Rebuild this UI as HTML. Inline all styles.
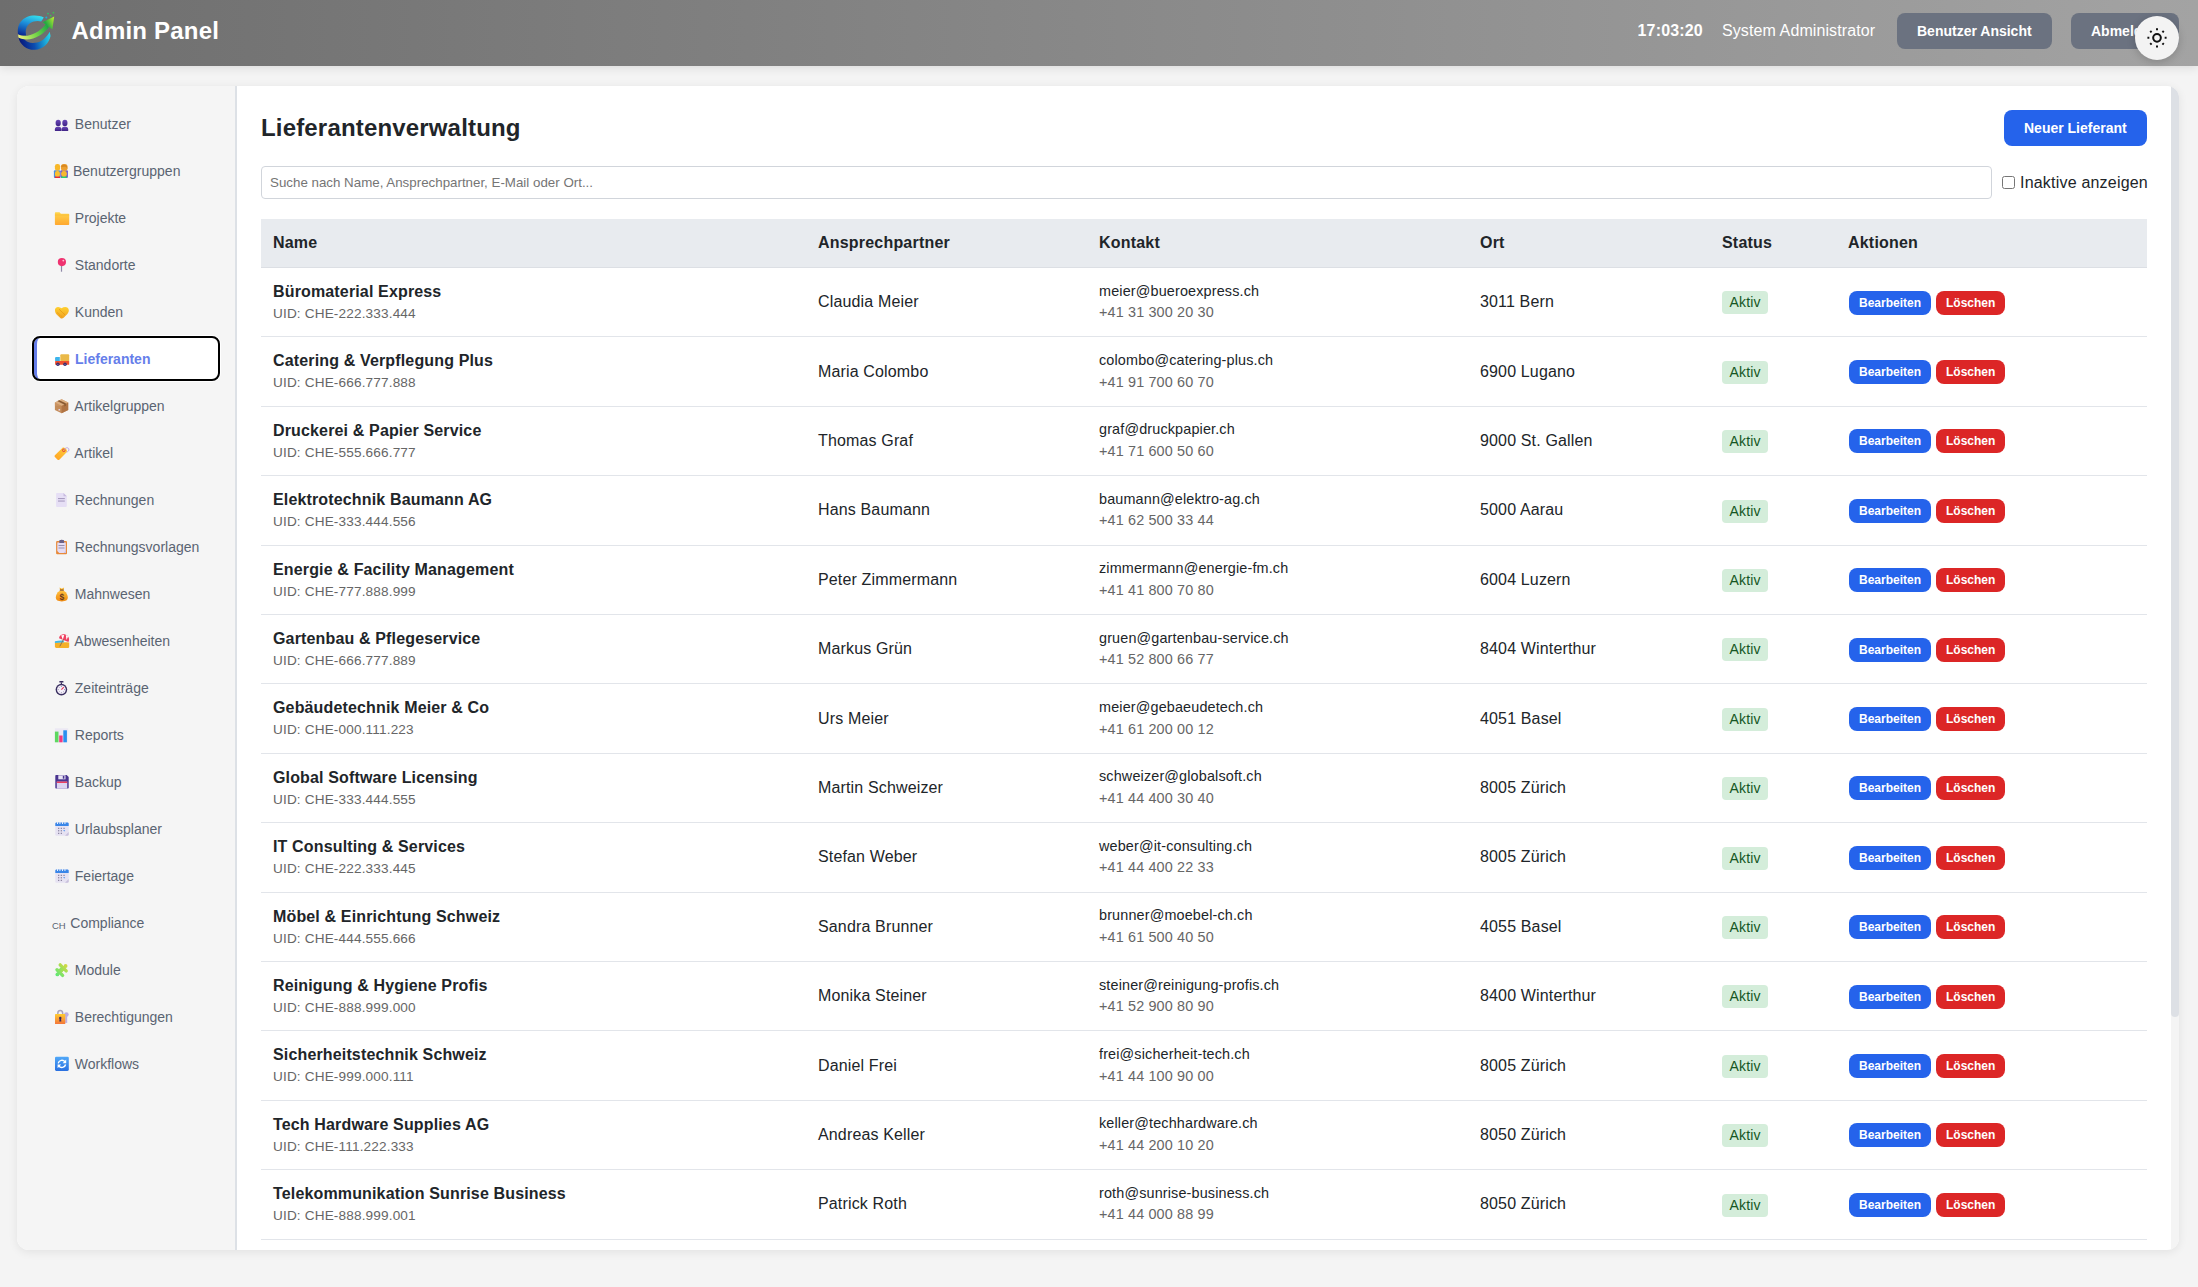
<!DOCTYPE html>
<html lang="de"><head><meta charset="utf-8"><title>Admin Panel</title>
<style>
*{box-sizing:border-box}
html,body{margin:0;padding:0;width:2198px;height:1287px;overflow:hidden}
body{background:#f4f4f4;font-family:"Liberation Sans",sans-serif;color:#212529;position:relative}
.hdr{position:absolute;left:0;top:0;width:2198px;height:66px;background:linear-gradient(90deg,#6e6e6e 0%,#a3a3a3 100%);box-shadow:0 2px 9px rgba(0,0,0,.1);z-index:2}
.logo{position:absolute;left:10px;top:5px}
.brand{position:absolute;left:71.5px;top:17px;font-size:24px;font-weight:bold;color:#fff;line-height:28px;letter-spacing:.2px}
.time{position:absolute;left:1637.5px;top:22px;font-size:16px;font-weight:bold;color:#fff;line-height:18px;letter-spacing:.17px}
.user{position:absolute;left:1722px;top:22px;font-size:16px;color:#fff;line-height:18px;letter-spacing:.1px}
.hbtn{position:absolute;top:13px;height:36px;padding:0 20px;background:#6b7280;color:#fff;font-size:14px;font-weight:bold;line-height:36px;border-radius:8px;white-space:nowrap}
.toggle{position:absolute;left:2135px;top:16px;width:44px;height:44px;border-radius:50%;background:#f3f3f3;box-shadow:0 2px 8px rgba(0,0,0,.18);display:flex;align-items:center;justify-content:center;z-index:3}
.card{position:absolute;left:17px;top:86px;width:2162px;height:1164px;border-radius:12px;background:#fff;box-shadow:0 2px 10px rgba(0,0,0,.08);overflow:hidden}
.side{position:absolute;left:0;top:0;width:220px;height:1164px;background:#f5f5f5;border-right:2px solid #dde1e6}
.mi{position:absolute;left:17px;width:184px;height:41px;font-size:14px;color:#5a6472;line-height:16px;white-space:nowrap}
.mi .ic{position:absolute;left:20px;top:14px;width:16px;height:16px}
.mi .ic svg{display:block;overflow:visible}
.mi .lb{position:absolute;left:40.8px;top:13px}
.mi .chtxt{position:absolute;left:-2.1px;top:3.6px;font-size:9.5px;line-height:11px;color:#5a6472}
.mi.active{background:#fff;border-left:3px solid #667eea;border-radius:6px;outline:2px solid #000;outline-offset:0;box-shadow:0 0 0 3px #fff}
.mi.active .ic{left:17px}
.mi.active .lb{left:38px;color:#667eea;font-weight:bold}
.content{position:absolute;left:220px;top:0;width:1942px;height:1164px;overflow:hidden}
.sb{position:absolute;right:0;top:0;width:8px;height:1164px;background:#f4f4f4}
.thumb{position:absolute;right:0;top:0;width:8px;height:931px;background:#dde0e5;border-radius:0 0 4px 4px}
.title{position:absolute;left:24px;top:24px;font-size:24px;font-weight:bold;line-height:36px;margin:0;color:#212529;letter-spacing:.17px}
.newbtn{position:absolute;left:1767px;top:24px;height:36px;padding:0 20px;background:#2563eb;color:#fff;font-size:14px;font-weight:bold;line-height:36px;border-radius:8px}
.search{position:absolute;left:24px;top:80px;width:1731px;height:33px;border:1px solid #d1d5db;border-radius:4px;background:#fff;font-size:13.333px;color:#757575;padding:0 8px;line-height:32px}
.chk{position:absolute;left:1765px;top:90px;width:13px;height:13px;border:1px solid #767676;border-radius:2.5px;background:#fff}
.chkl{position:absolute;left:1783px;top:88px;font-size:16px;color:#212529;line-height:18px;letter-spacing:.2px}
table{position:absolute;left:24px;top:133px;width:1886px;border-collapse:collapse;table-layout:fixed}
th{background:#e8ebef;text-align:left;font-size:16px;font-weight:bold;padding:12px;line-height:24px;border-bottom:1px solid #dcdfe4;color:#212529;letter-spacing:.2px}
td{padding:12px;border-bottom:1px solid #e2e5ea;vertical-align:middle;line-height:1.5;font-size:16px;color:#212529;letter-spacing:.15px}
td.act{padding-left:13px;letter-spacing:0}
.nm{font-weight:bold;font-size:16px;line-height:24px}
.uid{font-size:13.6px;line-height:20.4px;color:#666}
.em{font-size:14.4px;line-height:21.6px;color:#212529}
.ph{font-size:14.4px;line-height:21.6px;color:#666}
.badge{display:inline-block;background:#d4edda;color:#155724;font-size:14px;line-height:21px;padding:1px 7.5px;border-radius:4px;vertical-align:middle}
.btn{display:inline-block;color:#fff;font-size:12px;font-weight:bold;line-height:14px;padding:5px 10px;border-radius:8px;margin-right:5px;vertical-align:middle}
.be{background:#2563eb}
.lo{background:#dc2626}
</style></head><body>
<div class="hdr">
<div class="logo"><svg width="60" height="55" viewBox="10 5 60 55">
<defs>
<linearGradient id="lg1" gradientUnits="userSpaceOnUse" x1="30" y1="14" x2="24" y2="36"><stop offset="0" stop-color="#34dcec"/><stop offset=".45" stop-color="#1c8ad8"/><stop offset="1" stop-color="#0a2590"/></linearGradient>
<linearGradient id="lg3" gradientUnits="userSpaceOnUse" x1="20" y1="44" x2="50" y2="38"><stop offset="0" stop-color="#08187a"/><stop offset=".45" stop-color="#0c4cb0"/><stop offset="1" stop-color="#22d0ea"/></linearGradient>
<linearGradient id="lg2" gradientUnits="userSpaceOnUse" x1="18" y1="37" x2="54" y2="17"><stop offset="0" stop-color="#f0f080"/><stop offset=".4" stop-color="#78d848"/><stop offset=".75" stop-color="#22a844"/><stop offset="1" stop-color="#c0f030"/></linearGradient>
</defs>
<path d="M43.8,17.4 C 37,14.2 26,14.5 20.5,22 C 17.6,26 17.4,31 18.2,35.5 L 26.2,35.8 C 25,30.5 26.5,25.5 30,23.3 C 33.5,21 38,20.6 41.2,21.6 Z" fill="url(#lg1)"/>
<path d="M18.4,37.2 C 20,45 27,50 34.5,49.8 C 43,49.6 49.2,43 50.6,36 L 49.7,31.8 C 46.5,37 43,41.2 37,42.6 C 31,43.8 27,42.4 24.5,39.5 Z" fill="url(#lg3)"/>
<path d="M18,34.2 C 26,38.5 38,34 45.5,24.5 L 42.5,22.2 L 54.2,16.5 L 52.3,29.4 L 49.2,26.8 C 42,36.5 30,42.5 18.6,37.8 Z" fill="url(#lg2)"/>
<circle cx="46.3" cy="17.6" r="1" fill="#18b0d8"/><circle cx="48" cy="13.6" r=".9" fill="#30c070"/><circle cx="50.6" cy="15.7" r=".9" fill="#40c050"/><circle cx="53.4" cy="12.7" r=".9" fill="#40c050"/>
</svg></div>
<div class="brand">Admin Panel</div>
<div class="time">17:03:20</div>
<div class="user">System Administrator</div>
<div class="hbtn" style="left:1897px">Benutzer Ansicht</div>
<div class="hbtn" style="left:2071px">Abmelden</div>
</div>
<div class="toggle"><svg width="23" height="23" viewBox="0 0 24 24" fill="none" stroke="#111" stroke-width="2.1" stroke-linecap="butt" style="transform:translate(-0.5px,-0.7px)"><circle cx="12" cy="12" r="4"/><path d="M12 2v2M12 20v2M4.93 4.93l1.41 1.41M17.66 17.66l1.41 1.41M2 12h2M20 12h2M6.34 17.66l-1.41 1.41M19.07 4.93l-1.41 1.41"/></svg></div>
<div class="card">
<div class="side">
<div class="mi" style="top:17px"><span class="ic"><svg width="16" height="16" viewBox="0 0 16 16"><defs><linearGradient id="gu" x1="0" y1="0" x2="0" y2="1"><stop offset="0" stop-color="#6a48b8"/><stop offset="1" stop-color="#3f2385"/></linearGradient></defs><g fill="url(#gu)"><ellipse cx="4.2" cy="6" rx="2.6" ry="3.2"/><ellipse cx="10.9" cy="6" rx="2.6" ry="3.2"/><path d="M0.9 14v-1.8c0-1.4 1-2.4 2.4-2.4h1.8c1.4 0 2.3 1 2.3 2.4V14z"/><path d="M7.6 14v-1.8c0-1.4 1-2.4 2.4-2.4h1.8c1.4 0 2.4 1 2.4 2.4V14z"/></g></svg></span><span class="lb">Benutzer</span></div>
<div class="mi" style="top:64px"><span class="ic"><svg width="16" height="16" viewBox="0 0 16 16"><rect x="-0.1" y="6.2" width="6.2" height="7.8" rx="1" fill="#4a8ee0"/><rect x="6.3" y="6.2" width="7.6" height="7.8" rx="1" fill="#6a5ad0"/><rect x="0.9" y="-0.1" width="5.2" height="6.9" rx="2.3" fill="#f8b828"/><rect x="7" y="-0.1" width="6.5" height="6.9" rx="2.6" fill="#eca030"/><path d="M7.2 2.2c.4-1.8 5.4-2 6 .2l.2 2.6-1.2-2c-1.2-.5-3.4-.5-4.6.3z" fill="#d88820"/><rect x="1" y="6.9" width="4.9" height="6" rx="2" fill="#fbc030"/><rect x="7.2" y="6.9" width="5.6" height="6" rx="2.3" fill="#f8b830"/><rect x="0.9" y="12.6" width="5.1" height="1.4" fill="#e8283a"/><rect x="7.2" y="12.6" width="5.6" height="1.4" fill="#28d070"/></svg></span><span class="lb" style="left:39px">Benutzergruppen</span></div>
<div class="mi" style="top:111px"><span class="ic"><svg width="16" height="16" viewBox="0 0 16 16"><defs><linearGradient id="gf" x1="0" y1="0" x2="0" y2="1"><stop offset="0" stop-color="#ffd54a"/><stop offset="1" stop-color="#ffa830"/></linearGradient></defs><path d="M0.9 2.3c0-.6.4-1 1-1h3.6l1.4 1.4h7.3c.6 0 1 .4 1 1V13c0 .6-.4 1-1 1H1.9c-.6 0-1-.4-1-1z" fill="url(#gf)"/><path d="M0.9 4h14.3" stroke="#f0b030" stroke-width=".5"/></svg></span><span class="lb">Projekte</span></div>
<div class="mi" style="top:158px"><span class="ic"><svg width="16" height="16" viewBox="0 0 16 16"><rect x="6.9" y="7.5" width="1.2" height="6.2" fill="#8f88a8"/><circle cx="7.9" cy="4.1" r="4.1" fill="#ef3370"/><circle cx="9.3" cy="2.6" r="0.9" fill="#ffc0d4"/></svg></span><span class="lb">Standorte</span></div>
<div class="mi" style="top:205px"><span class="ic"><svg width="16" height="16" viewBox="0 0 16 16"><defs><linearGradient id="gh" x1="0" y1="0" x2="0" y2="1"><stop offset="0" stop-color="#ffd030"/><stop offset="1" stop-color="#f0a020"/></linearGradient></defs><path d="M1 4.6C1.3 3 2.6 2 4.2 2.1c1.3.1 2.4.6 3.4 1.1 1-.7 2.3-1.1 3.7-1.1 1.8 0 3.3 1.2 3.5 2.9.2 1.5-.5 2.8-1.4 3.9l-3.8 3.9c-.9.8-2.4.9-3.3.1L2.4 9.3C1.4 8.1.8 6.4 1 4.6z" fill="url(#gh)"/><path d="M5 4.2l3.6 3.4 2.4 2.2M3.2 7.6l1.6 1.4M5 9.6l1.2 1M6.8 10.6l.9.8" stroke="#e4920e" stroke-width=".7" fill="none"/></svg></span><span class="lb">Kunden</span></div>
<div class="mi active" style="top:252px"><span class="ic"><svg width="16" height="16" viewBox="0 0 16 16"><rect x="6.3" y="2.3" width="8.9" height="7.3" rx="1" fill="#eab948"/><path d="M1.1 6.2c0-.6.5-1.1 1.1-1.1h3.6v4H1.1z" fill="#3cb4ec"/><rect x="1.1" y="8.9" width="14.1" height="3.9" rx=".5" fill="#f2502e"/><circle cx="3.9" cy="12.3" r="1.8" fill="#3a2a68"/><circle cx="11" cy="12.3" r="1.8" fill="#3a2a68"/><circle cx="3.9" cy="12.3" r=".6" fill="#8a7ab8"/><circle cx="11" cy="12.3" r=".6" fill="#8a7ab8"/></svg></span><span class="lb">Lieferanten</span></div>
<div class="mi" style="top:299px"><span class="ic"><svg width="16" height="16" viewBox="0 0 16 16"><path d="M7.6 0.2l6.6 3.3v7.4L7.6 14.2 0.9 10.9V3.5z" fill="#c48c5a"/><path d="M7.6 6.8l6.6-3.3v7.4l-6.6 3.3z" fill="#b07444"/><path d="M0.9 3.5l6.7 3.3-6.7 0z" fill="#d8a070" opacity=".4"/><path d="M0.9 3.5L7.6 0.2l6.6 3.3-6.6 3.3z" fill="#dcae80"/><path d="M3.8 2l6.6 3.3v2.2l1.4-.7V4.3L5.3 1.2z" fill="#8a5a30"/><path d="M3.8 2l6.6 3.3" stroke="#6a4020" stroke-width=".4"/><rect x="4.5" y="10" width="1.6" height="1.6" fill="#e8e0ff" opacity=".8"/></svg></span><span class="lb" style="left:40.3px">Artikelgruppen</span></div>
<div class="mi" style="top:346px"><span class="ic"><svg width="16" height="16" viewBox="0 0 16 16"><defs><linearGradient id="gt" x1="0" y1="1" x2="1" y2="0"><stop offset="0" stop-color="#ffa020"/><stop offset="1" stop-color="#ffd040"/></linearGradient></defs><path d="M0.9 9.3L8.3 1.9c.4-.4 1-.5 1.5-.3l2.2 1 1 2.2c.2.5.1 1.1-.3 1.5L5.3 13.7c-.5.5-1.2.5-1.7 0L.9 11c-.5-.5-.5-1.2 0-1.7z" fill="url(#gt)"/><circle cx="9.8" cy="4.3" r="1.3" fill="none" stroke="#e04040" stroke-width="1"/><path d="M10.4 3.6c.8-2 3.6-2.6 4.4-.7.6 1.5-.6 3-2.2 3" stroke="#b8a0e0" stroke-width=".9" fill="none"/></svg></span><span class="lb" style="left:40.3px">Artikel</span></div>
<div class="mi" style="top:393px"><span class="ic"><svg width="16" height="16" viewBox="0 0 16 16"><path d="M2.1 0.9c0-.5.4-1 1-1h6.4l3.3 3.4V13c0 .5-.5 1-1 1H3.1c-.6 0-1-.5-1-1z" fill="#e6dff5"/><path d="M9.5-0.1v2.5c0 .5.4.9.9.9h2.4z" fill="#c8bce0"/><rect x="4" y="5" width="6.8" height="1.1" fill="#a89cc0"/><rect x="4" y="7.5" width="6.8" height="1.1" fill="#a89cc0"/></svg></span><span class="lb">Rechnungen</span></div>
<div class="mi" style="top:440px"><span class="ic"><svg width="16" height="16" viewBox="0 0 16 16"><rect x="2.1" y="0.9" width="10.9" height="13.3" rx="1" fill="#e88a3a"/><path d="M3.3 2.6h8.5v10.4H5.2l-1.9-1.9z" fill="#e4dcf4"/><path d="M9.6 13h2.2v-2.2z" fill="#c8bce0"/><path d="M5.3 0.8c0-.4.3-.7.7-.7h.8c.3-.6 1.5-.6 1.8 0h.8c.4 0 .7.3.7.7V3H5.3z" fill="#6a6088"/><rect x="4.5" y="5" width="6" height="1" fill="#9890b0"/><rect x="4.5" y="7.5" width="6" height="1" fill="#9890b0"/></svg></span><span class="lb">Rechnungsvorlagen</span></div>
<div class="mi" style="top:487px"><span class="ic"><svg width="16" height="16" viewBox="0 0 16 16"><defs><linearGradient id="gb" x1="0" y1="0" x2="0" y2="1"><stop offset="0" stop-color="#ffc040"/><stop offset="1" stop-color="#f08a10"/></linearGradient></defs><path d="M5.5 0.5l2.3 1.2 2.3-1.2-.6 2.4H6.1z" fill="#f5b020"/><rect x="5.8" y="2.6" width="4" height="1.2" fill="#7a4020"/><path d="M5.8 3.8C2.6 5.6 1.8 8.8 1.8 10.8c0 2.3 2 3.6 6 3.6s6-1.3 6-3.6c0-2-.8-5.2-4-7z" fill="url(#gb)"/><text x="7.8" y="12.6" font-size="8.5" text-anchor="middle" fill="#6a3a20" font-family="Liberation Sans" font-weight="bold">$</text></svg></span><span class="lb">Mahnwesen</span></div>
<div class="mi" style="top:534px"><span class="ic"><svg width="16" height="16" viewBox="0 0 16 16"><path d="M0.9 8.6c4.5-.4 9.5-.6 14.3-.2V13c0 .5-.5.9-1 .9H1.9c-.5 0-1-.4-1-.9z" fill="#f5b028"/><path d="M0.9 7.2c3-.6 6-.8 9-.6v2c-3-.2-6 0-9 .5z" fill="#40b8e8"/><path d="M5 4.2c.3-3 3.8-4.8 6.8-3.5 3 1.2 4.2 4.7 2.6 7.3z" fill="#ef4060"/><path d="M7.2 1.3l1.6 4.4 1.4-4.8zM11.8.8l.7 5.2 1.6-3.4z" fill="#fff"/><path d="M9.6 5.2l-3.8 7.2" stroke="#8a6a50" stroke-width=".9"/></svg></span><span class="lb" style="left:40.3px">Abwesenheiten</span></div>
<div class="mi" style="top:581px"><span class="ic"><svg width="16" height="16" viewBox="0 0 16 16"><rect x="5.3" y="0" width="4.2" height="1.6" rx=".5" fill="#3a2f60"/><rect x="6.8" y="1.4" width="1.2" height="1.6" fill="#3a2f60"/><circle cx="7.4" cy="8.6" r="5.8" fill="#3a2f60"/><circle cx="7.4" cy="8.6" r="4.4" fill="#f4f0fa"/><g stroke="#6a6088" stroke-width=".7"><path d="M7.4 4.9v1M7.4 11.3v1M3.7 8.6h1M10.1 8.6h1M4.8 6l.6.6M9.4 10.6l.6.6M4.8 11.2l.6-.6"/></g><path d="M7.4 8.6l2.4-2.4" stroke="#e83a5a" stroke-width="1.1"/></svg></span><span class="lb">Zeiteinträge</span></div>
<div class="mi" style="top:628px"><span class="ic"><svg width="16" height="16" viewBox="0 0 16 16"><rect x="0.9" y="0.3" width="13.3" height="14" fill="#ece8f4"/><rect x="0.9" y="3.6" width="3.6" height="10.7" fill="#5ed860"/><rect x="5.2" y="7.5" width="3.4" height="6.8" fill="#f03a80"/><rect x="9.3" y="2.3" width="3.6" height="12" fill="#2a90f0"/></svg></span><span class="lb">Reports</span></div>
<div class="mi" style="top:675px"><span class="ic"><svg width="16" height="16" viewBox="0 0 16 16"><path d="M1.3 1.1c0-.6.4-1 1-1h10.4l2 2v10.5c0 .6-.4 1-1 1H2.3c-.6 0-1-.4-1-1z" fill="#4a3590"/><rect x="4.3" y="0.3" width="7.2" height="4" fill="#e8e4f4"/><rect x="8.8" y="0.9" width="1.6" height="2.8" fill="#4a3590"/><rect x="2.8" y="6.6" width="10.4" height="7" fill="#dcd4f0"/><rect x="2.8" y="6.6" width="10.4" height="1.3" fill="#f03050"/></svg></span><span class="lb">Backup</span></div>
<div class="mi" style="top:722px"><span class="ic"><svg width="16" height="16" viewBox="0 0 16 16"><rect x="1.3" y="0.6" width="13.4" height="13.1" rx="1.2" fill="#e6e2f2"/><path d="M1.3 1.8c0-.6.5-1.2 1.2-1.2h11c.7 0 1.2.6 1.2 1.2V4H1.3z" fill="#3a86e8"/><g fill="#fff"><rect x="3" y="0.2" width=".9" height="1.8"/><rect x="5.5" y="0.2" width=".9" height="1.8"/><rect x="8" y="0.2" width=".9" height="1.8"/><rect x="10.5" y="0.2" width=".9" height="1.8"/></g><g fill="#7a7290"><rect x="4" y="5.8" width="1.3" height="1"/><rect x="6.7" y="5.8" width="1.3" height="1"/><rect x="9.4" y="5.8" width="1.3" height="1"/><rect x="4" y="8.3" width="1.3" height="1"/><rect x="6.7" y="8.3" width="1.3" height="1"/><rect x="4" y="10.8" width="1.3" height="1"/><rect x="6.7" y="10.8" width="1.3" height="1"/></g><path d="M9.2 8.2h2l-1 1.4z" fill="#3a86e8"/><path d="M11 13.7l3.7-3.7v2.5c0 .7-.5 1.2-1.2 1.2z" fill="#c8c0dc"/></svg></span><span class="lb">Urlaubsplaner</span></div>
<div class="mi" style="top:769px"><span class="ic"><svg width="16" height="16" viewBox="0 0 16 16"><rect x="1.3" y="0.6" width="13.4" height="13.1" rx="1.2" fill="#e6e2f2"/><path d="M1.3 1.8c0-.6.5-1.2 1.2-1.2h11c.7 0 1.2.6 1.2 1.2V4H1.3z" fill="#3a86e8"/><g fill="#fff"><rect x="3" y="0.2" width=".9" height="1.8"/><rect x="5.5" y="0.2" width=".9" height="1.8"/><rect x="8" y="0.2" width=".9" height="1.8"/><rect x="10.5" y="0.2" width=".9" height="1.8"/></g><g fill="#7a7290"><rect x="4" y="5.8" width="1.3" height="1"/><rect x="6.7" y="5.8" width="1.3" height="1"/><rect x="9.4" y="5.8" width="1.3" height="1"/><rect x="4" y="8.3" width="1.3" height="1"/><rect x="6.7" y="8.3" width="1.3" height="1"/><rect x="4" y="10.8" width="1.3" height="1"/><rect x="6.7" y="10.8" width="1.3" height="1"/></g><path d="M9.2 8.2h2l-1 1.4z" fill="#3a86e8"/><path d="M11 13.7l3.7-3.7v2.5c0 .7-.5 1.2-1.2 1.2z" fill="#c8c0dc"/></svg></span><span class="lb">Feiertage</span></div>
<div class="mi" style="top:816px"><span class="ic"><span class="chtxt">CH</span></span><span class="lb" style="left:36.3px">Compliance</span></div>
<div class="mi" style="top:863px"><span class="ic"><svg width="16" height="16" viewBox="0 0 16 16"><defs><linearGradient id="gp" gradientUnits="userSpaceOnUse" x1="2" y1="13" x2="13" y2="2"><stop offset="0" stop-color="#5ae878"/><stop offset="1" stop-color="#d4d840"/></linearGradient></defs><g stroke="url(#gp)" stroke-width="3.4" stroke-linecap="round" fill="none"><path d="M6.2 1.9L12.2 7.9"/><path d="M3 6.8L8.6 12.4"/><path d="M5 9.6L9.8 4.8"/></g><g fill="url(#gp)"><circle cx="11.6" cy="3" r="1.9"/><circle cx="3.4" cy="11.4" r="1.9"/><rect x="5.2" y="4.6" width="4.5" height="4.5" transform="rotate(45 7.45 6.85)"/></g></svg></span><span class="lb">Module</span></div>
<div class="mi" style="top:910px"><span class="ic"><svg width="16" height="16" viewBox="0 0 16 16"><defs><linearGradient id="gl" x1="0" y1="0" x2="0" y2="1"><stop offset="0" stop-color="#ffcc30"/><stop offset="1" stop-color="#f4763a"/></linearGradient></defs><circle cx="12.4" cy="4.5" r="2.3" fill="#bcaee4"/><rect x="11.2" y="5.5" width="2" height="7.4" fill="#bcaee4"/><path d="M3.8 4.4V3.6C3.8 1.8 4.8.6 6.2.6s2.5 1.2 2.5 3v.8" stroke="#aaa4bc" stroke-width="1.5" fill="none"/><rect x="1" y="3.95" width="10.3" height="10.05" rx=".6" fill="url(#gl)"/><circle cx="6.3" cy="8" r="1.2" fill="#3a2a60"/><path d="M5.6 8.2h1.4l.3 3.3H5.3z" fill="#3a2a60"/></svg></span><span class="lb">Berechtigungen</span></div>
<div class="mi" style="top:957px"><span class="ic"><svg width="16" height="16" viewBox="0 0 16 16"><defs><linearGradient id="gw" x1="0" y1="0" x2="0" y2="1"><stop offset="0" stop-color="#50a8f8"/><stop offset="1" stop-color="#2a70e0"/></linearGradient></defs><rect x="1" y="-0.2" width="13.8" height="14.1" rx="1.3" fill="url(#gw)"/><path d="M4.2 6.3a3.8 3.8 0 0 1 6.8-1.4M11.6 7.5a3.8 3.8 0 0 1-6.8 1.4" stroke="#fff" stroke-width="1.4" fill="none"/><path d="M12.2 2.6v3.6H8.6z M3.6 11.2V7.6h3.6z" fill="#fff"/></svg></span><span class="lb">Workflows</span></div>
</div>
<div class="content">
<h1 class="title">Lieferantenverwaltung</h1>
<div class="newbtn">Neuer Lieferant</div>
<div class="search">Suche nach Name, Ansprechpartner, E-Mail oder Ort...</div>
<div class="chk"></div><div class="chkl">Inaktive anzeigen</div>
<table>
<colgroup><col style="width:545px"><col style="width:281px"><col style="width:381px"><col style="width:242px"><col style="width:126px"><col style="width:311px"></colgroup>
<thead><tr><th>Name</th><th>Ansprechpartner</th><th>Kontakt</th><th>Ort</th><th>Status</th><th>Aktionen</th></tr></thead>
<tbody>
<tr><td><div class="nm">Büromaterial Express</div><div class="uid">UID: CHE-222.333.444</div></td><td class="ap">Claudia Meier</td><td><div class="em">meier@bueroexpress.ch</div><div class="ph">+41 31 300 20 30</div></td><td class="ort">3011 Bern</td><td><span class="badge">Aktiv</span></td><td class="act"><span class="btn be">Bearbeiten</span><span class="btn lo">Löschen</span></td></tr>
<tr><td><div class="nm">Catering &amp; Verpflegung Plus</div><div class="uid">UID: CHE-666.777.888</div></td><td class="ap">Maria Colombo</td><td><div class="em">colombo@catering-plus.ch</div><div class="ph">+41 91 700 60 70</div></td><td class="ort">6900 Lugano</td><td><span class="badge">Aktiv</span></td><td class="act"><span class="btn be">Bearbeiten</span><span class="btn lo">Löschen</span></td></tr>
<tr><td><div class="nm">Druckerei &amp; Papier Service</div><div class="uid">UID: CHE-555.666.777</div></td><td class="ap">Thomas Graf</td><td><div class="em">graf@druckpapier.ch</div><div class="ph">+41 71 600 50 60</div></td><td class="ort">9000 St. Gallen</td><td><span class="badge">Aktiv</span></td><td class="act"><span class="btn be">Bearbeiten</span><span class="btn lo">Löschen</span></td></tr>
<tr><td><div class="nm">Elektrotechnik Baumann AG</div><div class="uid">UID: CHE-333.444.556</div></td><td class="ap">Hans Baumann</td><td><div class="em">baumann@elektro-ag.ch</div><div class="ph">+41 62 500 33 44</div></td><td class="ort">5000 Aarau</td><td><span class="badge">Aktiv</span></td><td class="act"><span class="btn be">Bearbeiten</span><span class="btn lo">Löschen</span></td></tr>
<tr><td><div class="nm">Energie &amp; Facility Management</div><div class="uid">UID: CHE-777.888.999</div></td><td class="ap">Peter Zimmermann</td><td><div class="em">zimmermann@energie-fm.ch</div><div class="ph">+41 41 800 70 80</div></td><td class="ort">6004 Luzern</td><td><span class="badge">Aktiv</span></td><td class="act"><span class="btn be">Bearbeiten</span><span class="btn lo">Löschen</span></td></tr>
<tr><td><div class="nm">Gartenbau &amp; Pflegeservice</div><div class="uid">UID: CHE-666.777.889</div></td><td class="ap">Markus Grün</td><td><div class="em">gruen@gartenbau-service.ch</div><div class="ph">+41 52 800 66 77</div></td><td class="ort">8404 Winterthur</td><td><span class="badge">Aktiv</span></td><td class="act"><span class="btn be">Bearbeiten</span><span class="btn lo">Löschen</span></td></tr>
<tr><td><div class="nm">Gebäudetechnik Meier &amp; Co</div><div class="uid">UID: CHE-000.111.223</div></td><td class="ap">Urs Meier</td><td><div class="em">meier@gebaeudetech.ch</div><div class="ph">+41 61 200 00 12</div></td><td class="ort">4051 Basel</td><td><span class="badge">Aktiv</span></td><td class="act"><span class="btn be">Bearbeiten</span><span class="btn lo">Löschen</span></td></tr>
<tr><td><div class="nm">Global Software Licensing</div><div class="uid">UID: CHE-333.444.555</div></td><td class="ap">Martin Schweizer</td><td><div class="em">schweizer@globalsoft.ch</div><div class="ph">+41 44 400 30 40</div></td><td class="ort">8005 Zürich</td><td><span class="badge">Aktiv</span></td><td class="act"><span class="btn be">Bearbeiten</span><span class="btn lo">Löschen</span></td></tr>
<tr><td><div class="nm">IT Consulting &amp; Services</div><div class="uid">UID: CHE-222.333.445</div></td><td class="ap">Stefan Weber</td><td><div class="em">weber@it-consulting.ch</div><div class="ph">+41 44 400 22 33</div></td><td class="ort">8005 Zürich</td><td><span class="badge">Aktiv</span></td><td class="act"><span class="btn be">Bearbeiten</span><span class="btn lo">Löschen</span></td></tr>
<tr><td><div class="nm">Möbel &amp; Einrichtung Schweiz</div><div class="uid">UID: CHE-444.555.666</div></td><td class="ap">Sandra Brunner</td><td><div class="em">brunner@moebel-ch.ch</div><div class="ph">+41 61 500 40 50</div></td><td class="ort">4055 Basel</td><td><span class="badge">Aktiv</span></td><td class="act"><span class="btn be">Bearbeiten</span><span class="btn lo">Löschen</span></td></tr>
<tr><td><div class="nm">Reinigung &amp; Hygiene Profis</div><div class="uid">UID: CHE-888.999.000</div></td><td class="ap">Monika Steiner</td><td><div class="em">steiner@reinigung-profis.ch</div><div class="ph">+41 52 900 80 90</div></td><td class="ort">8400 Winterthur</td><td><span class="badge">Aktiv</span></td><td class="act"><span class="btn be">Bearbeiten</span><span class="btn lo">Löschen</span></td></tr>
<tr><td><div class="nm">Sicherheitstechnik Schweiz</div><div class="uid">UID: CHE-999.000.111</div></td><td class="ap">Daniel Frei</td><td><div class="em">frei@sicherheit-tech.ch</div><div class="ph">+41 44 100 90 00</div></td><td class="ort">8005 Zürich</td><td><span class="badge">Aktiv</span></td><td class="act"><span class="btn be">Bearbeiten</span><span class="btn lo">Löschen</span></td></tr>
<tr><td><div class="nm">Tech Hardware Supplies AG</div><div class="uid">UID: CHE-111.222.333</div></td><td class="ap">Andreas Keller</td><td><div class="em">keller@techhardware.ch</div><div class="ph">+41 44 200 10 20</div></td><td class="ort">8050 Zürich</td><td><span class="badge">Aktiv</span></td><td class="act"><span class="btn be">Bearbeiten</span><span class="btn lo">Löschen</span></td></tr>
<tr><td><div class="nm">Telekommunikation Sunrise Business</div><div class="uid">UID: CHE-888.999.001</div></td><td class="ap">Patrick Roth</td><td><div class="em">roth@sunrise-business.ch</div><div class="ph">+41 44 000 88 99</div></td><td class="ort">8050 Zürich</td><td><span class="badge">Aktiv</span></td><td class="act"><span class="btn be">Bearbeiten</span><span class="btn lo">Löschen</span></td></tr>
<tr><td><div class="nm">Transport &amp; Logistik AG</div><div class="uid">UID: CHE-123.456.789</div></td><td class="ap">Beat Müller</td><td><div class="em">mueller@transport-ag.ch</div><div class="ph">+41 44 300 20 10</div></td><td class="ort">8000 Zürich</td><td><span class="badge">Aktiv</span></td><td class="act"><span class="btn be">Bearbeiten</span><span class="btn lo">Löschen</span></td></tr>
</tbody></table>
<div class="sb"><div class="thumb"></div></div>
</div>
</div>
</body></html>
